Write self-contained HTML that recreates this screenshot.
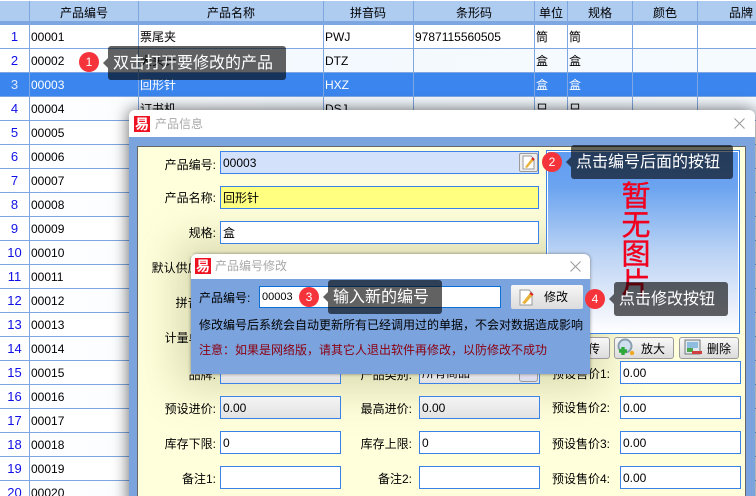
<!DOCTYPE html>
<html lang="zh"><head><meta charset="utf-8"><style>
html,body{margin:0;padding:0;background:#fff}
#p{position:relative;width:756px;height:496px;overflow:hidden;font:12px/14px "Liberation Sans","Noto Sans CJK SC",sans-serif;color:#000;background:#fff}
#p div,#p span.a{position:absolute;box-sizing:border-box;white-space:nowrap}
.v{top:1px;width:1px;height:495px;background:#7ea6e0}
.hd{top:1px;height:20px;background:#aecbf0;left:0;width:756px}
.h{top:6px;transform:translateX(-50%)}
.r{left:0;width:756px;height:24px;border-bottom:1px solid #7ea6e0;background:#fff}
.r.e{background:linear-gradient(90deg,#fff 0,#f3f9fe 40%,#f5faff 100%)}
.r.s{background:#3b85ee;color:#fff}
.r.s .n{color:#dfe9fb}
.n{left:0;width:29px;text-align:center;top:5px;color:#1010e6;font-size:13px}
.c{top:5px}
.dlg{background:#fff;border-radius:6px 6px 0 0;box-shadow:0 0 16px rgba(0,0,0,.62)}
.lg{width:16px;height:16px;background:#ee1122;color:#fff;font-size:14px;line-height:16px;text-align:center;font-weight:bold}
.t{color:#a9a9a9;font-size:12px}
.i{height:23px;border:1px solid #3b82e8;background:#fff;padding:4px 0 0 2px}
.g{background:linear-gradient(#f4f4f4,#e2e2e2)}
.l{text-align:right;width:70px}
.btn{top:337px;height:22px;border:1px solid #9b9b9b;border-radius:3px;background:linear-gradient(#f8f8f8,#dcdcdc)}
.tip{background:rgba(0,0,0,.615);border-radius:3px;color:#fff;font-size:16px;line-height:36px;height:34px;padding-left:5px}
.tip:before{content:"";position:absolute;left:-5px;top:12px;border:5px solid transparent;border-left:0;border-right-color:rgba(0,0,0,.615)}
.b{width:20px;height:20px;border-radius:50%;background:#f5333b;color:#fff;font-size:12px;line-height:20px;text-align:center}
</style></head><body><div id="p">

<div class="hd"></div>
<div class="h" style="left:84px">产品编号</div><div class="h" style="left:231px">产品名称</div><div class="h" style="left:368px">拼音码</div><div class="h" style="left:474px">条形码</div><div class="h" style="left:551px">单位</div><div class="h" style="left:600px">规格</div><div class="h" style="left:665px">颜色</div><div class="h" style="left:741px">品牌</div>
<div style="left:0;top:21px;width:756px;height:4px;background:#7ea6e0"></div>

<div class="r" style="top:25px"><div class="n">1</div><div class="c" style="left:31px">00001</div><div class="c" style="left:140px">票尾夹</div><div class="c" style="left:325px">PWJ</div><div class="c" style="left:415px">9787115560505</div><div class="c" style="left:536px">筒</div><div class="c" style="left:569px">筒</div></div>
<div class="r e" style="top:49px"><div class="n">2</div><div class="c" style="left:31px">00002</div><div class="c" style="left:140px">大头针</div><div class="c" style="left:325px">DTZ</div><div class="c" style="left:536px">盒</div><div class="c" style="left:569px">盒</div></div>
<div class="r s" style="top:73px"><div class="n">3</div><div class="c" style="left:31px">00003</div><div class="c" style="left:140px">回形针</div><div class="c" style="left:325px">HXZ</div><div class="c" style="left:536px">盒</div><div class="c" style="left:569px">盒</div></div>
<div class="r e" style="top:97px"><div class="n">4</div><div class="c" style="left:31px">00004</div><div class="c" style="left:140px">订书机</div><div class="c" style="left:325px">DSJ</div><div class="c" style="left:536px">只</div><div class="c" style="left:569px">只</div></div>
<div class="r" style="top:121px"><div class="n">5</div><div class="c" style="left:31px">00005</div></div>
<div class="r e" style="top:145px"><div class="n">6</div><div class="c" style="left:31px">00006</div></div>
<div class="r" style="top:169px"><div class="n">7</div><div class="c" style="left:31px">00007</div></div>
<div class="r e" style="top:193px"><div class="n">8</div><div class="c" style="left:31px">00008</div></div>
<div class="r" style="top:217px"><div class="n">9</div><div class="c" style="left:31px">00009</div></div>
<div class="r e" style="top:241px"><div class="n">10</div><div class="c" style="left:31px">00010</div></div>
<div class="r" style="top:265px"><div class="n">11</div><div class="c" style="left:31px">00011</div></div>
<div class="r e" style="top:289px"><div class="n">12</div><div class="c" style="left:31px">00012</div></div>
<div class="r" style="top:313px"><div class="n">13</div><div class="c" style="left:31px">00013</div></div>
<div class="r e" style="top:337px"><div class="n">14</div><div class="c" style="left:31px">00014</div></div>
<div class="r" style="top:361px"><div class="n">15</div><div class="c" style="left:31px">00015</div></div>
<div class="r e" style="top:385px"><div class="n">16</div><div class="c" style="left:31px">00016</div></div>
<div class="r" style="top:409px"><div class="n">17</div><div class="c" style="left:31px">00017</div></div>
<div class="r e" style="top:433px"><div class="n">18</div><div class="c" style="left:31px">00018</div></div>
<div class="r" style="top:457px"><div class="n">19</div><div class="c" style="left:31px">00019</div></div>
<div class="r e" style="top:481px"><div class="n">20</div><div class="c" style="left:31px">00020</div></div>

<div class="v" style="left:29px"></div><div class="v" style="left:138px"></div><div class="v" style="left:323px"></div><div class="v" style="left:413px"></div><div class="v" style="left:534px"></div><div class="v" style="left:567px"></div><div class="v" style="left:632px"></div><div class="v" style="left:697px"></div>

<!-- product dialog -->
<div class="dlg" style="left:129px;top:110px;width:626px;height:400px"></div>
<div class="lg" style="left:134px;top:116px">易</div>
<div class="t" style="left:155px;top:117px">产品信息</div>
<svg style="position:absolute;left:734px;top:118px" width="11" height="11"><path d="M0.5 0.5L10.5 10.5M10.5 0.5L0.5 10.5" stroke="#999" fill="none"/></svg>
<div style="left:129px;top:137px;width:626px;height:359px;background:#7ba3de"></div>
<div style="left:137px;top:146px;width:609px;height:350px;background:#ffffdc;border:1px solid #666;border-bottom:0;overflow:hidden">
  <div style="left:53px;top:107px;width:399px;height:120px;box-shadow:0 0 40px 14px rgba(110,110,50,.26)"></div>
</div>

<div class="l" style="left:146px;top:158px">产品编号:</div>
<div class="i" style="left:220px;top:151px;width:319px;background:#d3e1fb">00003</div>
<div style="left:519px;top:153px;width:19px;height:19px;border:1px solid #9a9a9a;border-radius:2px;background:#eee"></div>
<svg style="position:absolute;left:520px;top:154px" width="17" height="17"><path d="M3 2H11L14 5V15H3Z" fill="#fff" stroke="#999"/><path d="M5 13L12 4L14 6L7 14Z" fill="#e9b23c"/><path d="M12 4L14 6" stroke="#d22" stroke-width="2"/></svg>

<div class="l" style="left:146px;top:191px">产品名称:</div>
<div class="i" style="left:220px;top:186px;width:319px;background:#ffff80">回形针</div>
<div class="l" style="left:146px;top:226px">规格:</div>
<div class="i" style="left:220px;top:221px;width:319px">盒</div>
<div class="l" style="left:120px;top:261px;width:95px">默认供应商:</div>
<div class="l" style="left:145px;top:296px">拼音码:</div>
<div class="l" style="left:146px;top:331px">计量单位:</div>
<div class="i" style="left:220px;top:326px;width:121px"></div>
<div class="l" style="left:146px;top:368px">品牌:</div>
<div class="i g" style="left:220px;top:361px;width:121px"></div>
<div class="l" style="left:342px;top:368px">产品类别:</div>
<div class="i g" style="left:419px;top:361px;width:121px">所有商品</div>
<div style="left:519px;top:363px;width:19px;height:19px;border:1px solid #9a9a9a;border-radius:3px;background:#dde"></div>
<div class="l" style="left:146px;top:402px">预设进价:</div>
<div class="i g" style="left:220px;top:396px;width:121px">0.00</div>
<div class="l" style="left:342px;top:402px">最高进价:</div>
<div class="i g" style="left:419px;top:396px;width:121px">0.00</div>
<div class="l" style="left:146px;top:437px">库存下限:</div>
<div class="i" style="left:220px;top:431px;width:121px">0</div>
<div class="l" style="left:342px;top:437px">库存上限:</div>
<div class="i" style="left:419px;top:431px;width:121px">0</div>
<div class="l" style="left:146px;top:472px">备注1:</div>
<div class="i" style="left:220px;top:466px;width:121px"></div>
<div class="l" style="left:342px;top:472px">备注2:</div>
<div class="i" style="left:419px;top:466px;width:121px"></div>
<div class="l" style="left:540px;top:367px">预设售价1:</div>
<div class="i" style="left:620px;top:361px;width:121px">0.00</div>
<div class="l" style="left:540px;top:401px">预设售价2:</div>
<div class="i" style="left:620px;top:396px;width:121px">0.00</div>
<div class="l" style="left:540px;top:437px">预设售价3:</div>
<div class="i" style="left:620px;top:431px;width:121px">0.00</div>
<div class="l" style="left:540px;top:472px">预设售价4:</div>
<div class="i" style="left:620px;top:466px;width:121px">0.00</div>

<!-- image box -->
<div style="left:546px;top:150px;width:194px;height:184px;border:1px solid #3b82e8;box-shadow:inset 0 0 0 1px #fff;background:linear-gradient(#5f9bf0 0,#6ca4f0 20%,#b9d2f4 55%,#e8eefa 85%,#fff 100%)"></div>
<div style="left:620px;top:183px;width:32px;color:#f0001e;font-size:29px;line-height:29px;text-align:center;white-space:normal;-webkit-text-stroke:.4px #f0001e">暂<br>无<br>图<br>片</div>

<div class="btn" style="left:550px;width:60px;text-align:right;padding:4px 9px 0 0">上传</div>
<div class="btn" style="left:614px;width:60px;padding:4px 0 0 26px">放大</div>
<svg style="position:absolute;left:616px;top:338px" width="20" height="20"><circle cx="9" cy="8" r="6.5" fill="#cfe0ee" stroke="#8aa0b0" stroke-width="2"/><path d="M7 9v8M3 13h8" stroke="#2fa83a" stroke-width="3.4" fill="none"/><circle cx="16" cy="15" r="2.2" fill="#f3a821"/></svg>
<div class="btn" style="left:679px;width:60px;padding:4px 0 0 27px">删除</div>
<svg style="position:absolute;left:684px;top:339px" width="20" height="18"><rect x="1" y="1" width="15" height="14" fill="#dfe9ef" stroke="#777"/><rect x="3" y="3" width="11" height="6" fill="#8fbde0"/><rect x="3" y="9" width="6" height="4" fill="#4aa84a"/><rect x="8" y="12" width="10" height="3" fill="#d14040"/></svg>

<!-- code edit dialog -->
<div class="dlg" style="left:191px;top:254px;width:399px;height:120px;box-shadow:0 0 3px rgba(60,60,60,.6)"></div>
<div class="lg" style="left:195px;top:258px">易</div>
<div class="t" style="left:215px;top:259px">产品编号修改</div>
<svg style="position:absolute;left:570px;top:261px" width="11" height="11"><path d="M0.5 0.5L10.5 10.5M10.5 0.5L0.5 10.5" stroke="#999" fill="none"/></svg>
<div style="left:191px;top:279px;width:399px;height:95px;background:#7ba3de"></div>
<div style="left:199px;top:291px">产品编号:</div>
<div class="i" style="left:259px;top:286px;width:242px;height:22px;border-color:#0a6fd8;padding-top:3px;font-size:11px">00003</div>
<div style="left:511px;top:285px;width:72px;height:24px;border-radius:2px;background:linear-gradient(#f6f6f6,#dcdcdc)"></div>
<svg style="position:absolute;left:518px;top:289px" width="18" height="18"><path d="M2 1H11L14 4V16H2Z" fill="#fff" stroke="#999"/><path d="M4 14L12 4L15 6L7 15Z" fill="#e9b23c"/><path d="M12 4L15 6" stroke="#d22" stroke-width="2"/></svg>
<div style="left:544px;top:290px">修改</div>
<div style="left:199px;top:318px">修改编号后系统会自动更新所有已经调用过的单据&#xFF0C;不会对数据造成影响</div>
<div style="left:199px;top:343px;color:#8b0010">注意&#xFF1A;如果是网络版&#xFF0C;请其它人退出软件再修改&#xFF0C;以防修改不成功</div>

<!-- tooltips -->
<div class="tip" style="left:108px;top:46px;width:178px">双击打开要修改的产品</div>
<div class="b" style="left:79px;top:52px">1</div>
<div class="tip" style="left:571px;top:145px;width:162px">点击编号后面的按钮</div>
<div class="b" style="left:542px;top:152px">2</div>
<div class="tip" style="left:328px;top:280px;width:114px">输入新的编号</div>
<div class="b" style="left:299px;top:287px">3</div>
<div class="tip" style="left:614px;top:282px;width:114px">点击修改按钮</div>
<div class="b" style="left:585px;top:289px">4</div>
</div></body></html>
